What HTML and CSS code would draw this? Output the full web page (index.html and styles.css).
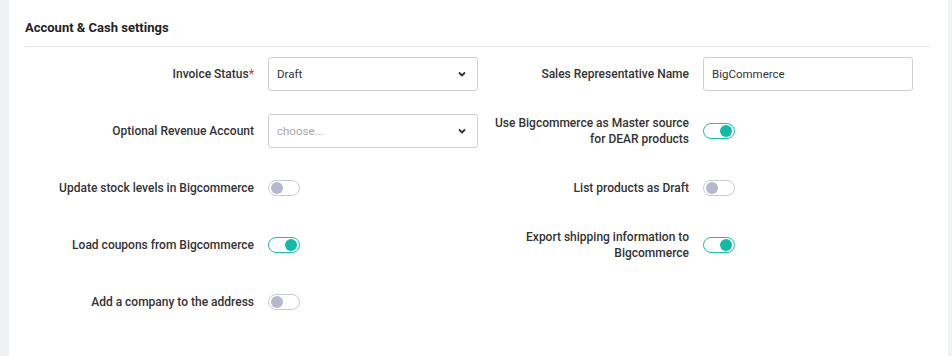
FILE: index.html
```html
<!DOCTYPE html>
<html>
<head>
  <title>Account &amp; Cash settings</title>
  <link rel="stylesheet" href="styles.css">
</head>
<body>
  <div class="panel">
    <h3 class="panel-title">Account &amp; Cash settings</h3>
    <div class="form-grid">
      <label class="field-label">Invoice Status<span class="req">*</span></label>
      <div class="select"><span>Draft</span><svg class="chevron" width="8" height="6" viewBox="0 0 8 6"><path d="M1 1.5 L4 4.5 L7 1.5" fill="none" stroke="#333" stroke-width="1.8"/></svg></div>
      <label class="field-label">Sales Representative Name</label>
      <div class="text-input">BigCommerce</div>

      <label class="field-label">Optional Revenue Account</label>
      <div class="select"><span class="placeholder">choose...</span><svg class="chevron" width="8" height="6" viewBox="0 0 8 6"><path d="M1 1.5 L4 4.5 L7 1.5" fill="none" stroke="#333" stroke-width="1.8"/></svg></div>
      <label class="field-label">Use Bigcommerce as Master source for DEAR products</label>
      <div class="toggle-cell"><span class="toggle on"></span></div>

      <label class="field-label">Update stock levels in Bigcommerce</label>
      <div class="toggle-cell"><span class="toggle"></span></div>
      <label class="field-label">List products as Draft</label>
      <div class="toggle-cell"><span class="toggle"></span></div>

      <label class="field-label">Load coupons from Bigcommerce</label>
      <div class="toggle-cell"><span class="toggle on"></span></div>
      <label class="field-label">Export shipping information to Bigcommerce</label>
      <div class="toggle-cell"><span class="toggle on"></span></div>

      <label class="field-label">Add a company to the address</label>
      <div class="toggle-cell"><span class="toggle"></span></div>
    </div>
  </div>
</body>
</html>
```

FILE: styles.css
```css
body {
  margin: 0;
  height: 356px;
  background-color: #f0f1f3;
  font-family: Roboto, "Noto Sans", sans-serif;
  color: #333;
  overflow: hidden;
}

.panel {
  margin: 0 4px 0 9px;
  height: 356px;
  background-color: #fff;
  padding: 0 18px 0 16px;
  box-sizing: border-box;
}

.panel-title {
  margin: 0;
  padding: 19px 0 10px 0;
  font-size: 13px;
  font-weight: 700;
  color: #222;
  line-height: 17px;
  border-bottom: 1px solid #e6e6e6;
}

.form-grid {
  display: grid;
  grid-template-columns: 229px 210px 197px 210px;
  grid-auto-rows: 34px;
  column-gap: 14px;
  row-gap: 23px;
  margin-top: 10px;
}

.field-label {
  display: flex;
  align-items: center;
  justify-content: flex-end;
  text-align: right;
  font-size: 12px;
  font-weight: 500;
  line-height: 16px;
}

.req {
  color: #e0393e;
}

.select,
.text-input {
  display: flex;
  align-items: center;
  justify-content: space-between;
  border: 1px solid #cfcfcf;
  border-radius: 3px;
  padding: 0 10px 0 8px;
  font-size: 11.5px;
  color: #333;
  box-sizing: border-box;
}

.placeholder {
  color: #a8a8a8;
}

.chevron {
  margin-right: 1px;
}

.toggle-cell {
  display: flex;
  align-items: center;
}

.toggle {
  position: relative;
  width: 32px;
  height: 16px;
  border: 1px solid #c9c9d2;
  border-radius: 9px;
  box-sizing: border-box;
  background: #fff;
}

.toggle::after {
  content: "";
  position: absolute;
  top: 1px;
  left: 2px;
  width: 12px;
  height: 12px;
  border-radius: 50%;
  background: #b8b8cc;
}

.toggle.on {
  border-color: #1cbfae;
}

.toggle.on::after {
  left: auto;
  right: 2px;
  background: #12bba8;
}
```
